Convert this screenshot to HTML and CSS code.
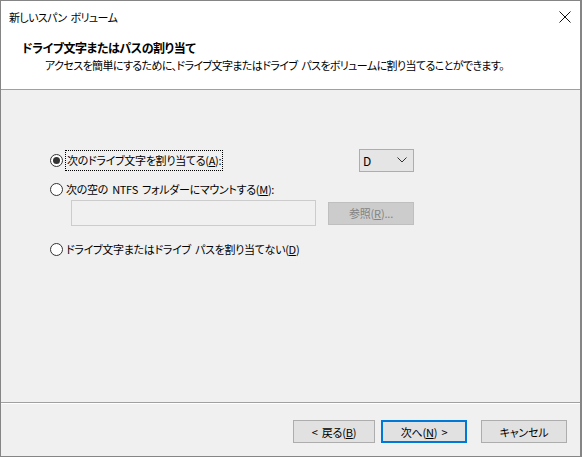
FILE: index.html
```html
<!DOCTYPE html>
<html lang="ja">
<head>
<meta charset="utf-8">
<link rel="stylesheet" href="styles.css">
</head>
<body>
<div class="window">
  <div class="titlebar">
    <span class="title">新しいスパン ボリューム</span>
    <svg class="close" width="12" height="12" viewBox="0 0 12 12"><path d="M0.5 0.5 L11.5 11.5 M11.5 0.5 L0.5 11.5" stroke="#111" stroke-width="1" fill="none"/></svg>
  </div>
  <div class="header">
    <div class="heading">ドライブ文字またはパスの割り当て</div>
    <div class="subtitle">アクセスを簡単にするために、ドライブ文字またはドライブ パスをボリュームに割り当てることができます。</div>
  </div>
  <div class="content">
    <div class="options">
      <div class="row row-first">
        <label class="radio-label">
          <span class="radio checked"></span>
          <span class="focus">次のドライブ文字を割り当てる(<u>A</u>):</span>
        </label>
        <div class="combo">
          <span>D</span>
          <svg width="10" height="6" viewBox="0 0 10 6"><path d="M0.5 0.5 L5 5 L9.5 0.5" stroke="#333" fill="none"/></svg>
        </div>
      </div>
      <div class="row row-second">
        <label class="radio-label">
          <span class="radio"></span>
          <span class="text">次の空の NTFS フォルダーにマウントする(<u>M</u>):</span>
        </label>
      </div>
      <div class="row row-path">
        <div class="pathbox"></div>
        <div class="btn disabled">参照(<u>R</u>)...</div>
      </div>
      <div class="row row-none">
        <label class="radio-label">
          <span class="radio"></span>
          <span class="text">ドライブ文字またはドライブ パスを割り当てない(<u>D</u>)</span>
        </label>
      </div>
    </div>
  </div>
  <div class="footer">
    <div class="btn back">&lt; 戻る(<u>B</u>)</div>
    <div class="btn next">次へ(<u>N</u>) &gt;</div>
    <div class="btn cancel">キャンセル</div>
  </div>
</div>
</body>
</html>
```
FILE: styles.css
```css
* { box-sizing: border-box; }
html, body { margin: 0; padding: 0; }
body {
  font-family: "Noto Sans CJK JP", "Noto Sans", sans-serif;
  font-size: 11px;
  letter-spacing: -0.6px;
  word-spacing: 2px;
  font-feature-settings: "palt";
  color: #000;
  background: #fff;
}
.window {
  width: 582px;
  height: 457px;
  border: 1px solid #858585;
  border-right-width: 2px;
  background: #f0f0f0;
  display: flex;
  flex-direction: column;
}
.titlebar {
  height: 30px;
  background: #fff;
  display: flex;
  align-items: center;
  justify-content: space-between;
  padding: 0 9px 0 8px;
}
.title { line-height: 16px; margin-top: 1px; }
.close { display: block; margin-top: 1px; }
.header {
  height: 59px;
  background: #fff;
  border-bottom: 1px solid #a0a0a0;
  padding: 9px 0 0 21px;
}
.heading { font-weight: bold; font-size: 12px; letter-spacing: -0.45px; line-height: 16px; }
.subtitle { line-height: 16px; margin-top: 1px; padding-left: 23px; }
.content {
  flex: 1;
  padding: 59px 0 0 49px;
  border-bottom: 1px solid #a0a0a0;
}
.options { width: 364px; letter-spacing: -0.3px; }
.row { display: flex; align-items: center; }
.row-first { height: 22px; justify-content: space-between; }
.row-second { height: 16px; margin-top: 10px; }
.row-path { height: 26px; margin-top: 3px; padding-left: 21px; }
.row-none { height: 16px; margin-top: 15px; }
.radio-label { display: flex; align-items: center; }
.radio {
  width: 13px;
  height: 13px;
  border: 1px solid #333;
  border-radius: 50%;
  background: #fff;
  position: relative;
  margin-right: 3px;
  flex: none;
}
.radio.checked::after {
  content: "";
  position: absolute;
  left: 2px; top: 2px;
  width: 7px; height: 7px;
  border-radius: 50%;
  background: #333;
}
.focus {
  outline: 1px dotted #000;
  padding: 1px 1px;
  line-height: 17px;
}
.text { line-height: 16px; }
.combo {
  width: 55px;
  height: 23px;
  border: 1px solid #adadad;
  background: #e5e5e5;
  display: flex;
  align-items: center;
  justify-content: space-between;
  padding: 0 6px 0 3px;
  font-size: 12px;
}
.combo svg { display: block; }
.pathbox {
  width: 245px;
  height: 26px;
  border: 1px solid #cccccc;
  background: #f0f0f0;
}
.btn {
  height: 23px;
  border: 1px solid #adadad;
  background: #e1e1e1;
  display: flex;
  align-items: center;
  justify-content: center;
  line-height: 16px;
  letter-spacing: -0.2px;
}
.btn.disabled {
  width: 86px;
  margin-left: 12px;
  background: #cccccc;
  border-color: #bfbfbf;
  color: #838383;
}
.footer {
  height: 53px;
  border-top: 1px solid #fff;
  display: flex;
  align-items: flex-start;
  justify-content: flex-end;
  padding: 16px 13px 0 0;
}
.back { width: 82px; }
.next { width: 86px; margin-left: 6px; border: 2px solid #0078d7; }
.cancel { width: 86px; margin-left: 14px; }
```
